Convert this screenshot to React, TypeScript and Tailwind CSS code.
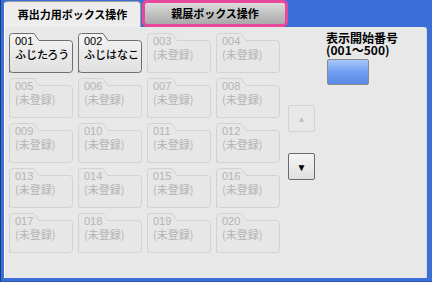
import React from "react";

const JP = "font-['Noto_Sans_CJK_JP','Noto_Sans',sans-serif]";
const NUM = "font-['Liberation_Sans_Narrow','Liberation_Sans',sans-serif]";

function FolderShape({ active }: { active: boolean }) {
  const d =
    "M0.5 39.5 L0.5 3.5 Q0.5 0.5 3.5 0.5 L25 0.5 L30 7.5 L60.5 7.5 Q63.5 7.5 63.5 10.5 L63.5 36.5 Q63.5 39.5 60.5 39.5 L3.5 39.5 Q0.5 39.5 0.5 36.5 Z";
  return (
    <svg className="absolute inset-0" width="64" height="40" viewBox="0 0 64 40">
      <defs>
        <linearGradient id="fa" x1="0" y1="0" x2="0" y2="1">
          <stop offset="0" stopColor="#f4f4f4" />
          <stop offset="1" stopColor="#e0e0e0" />
        </linearGradient>
      </defs>
      <path
        d={d}
        fill={active ? "url(#fa)" : "#e7e7e7"}
        stroke={active ? "#6e6e6e" : "#d2d2d2"}
        strokeWidth="1"
      />
    </svg>
  );
}

function Folder({ num, name }: { num: string; name?: string }) {
  const active = !!name;
  return (
    <div className="relative w-[64px] h-[40px]">
      <FolderShape active={active} />
      <div
        className={`relative flex flex-col pl-[6px] pt-[3px] ${
          active ? "text-black" : "text-[#b4b4b4]"
        }`}
      >
        <span className={`${NUM} h-[11px] text-[11px] leading-[11px]`}>{num}</span>
        <span className={`${JP} h-[14px] text-[11px] leading-[14px] ${active ? "font-medium" : ""}`}>
          {name ?? "(未登録)"}
        </span>
      </div>
    </div>
  );
}

export default function App() {
  const names: Record<number, string> = { 1: "ふじたろう", 2: "ふじはなこ" };
  const items = Array.from({ length: 20 }, (_, i) => i + 1);
  return (
    <div className="w-[432px] h-[282px] bg-[#3b6ed6] border-l border-l-[#1c3b7e] border-b border-b-[#2a55b0] flex flex-col pl-[3px] pr-[5px] pb-[3px] overflow-hidden">
      <div className="h-[27px] flex items-stretch shrink-0">
        <div
          className={`${JP} mt-[1px] w-[137px] bg-[#ededed] border border-b-0 border-[#9c9c9c] border-l-white rounded-t-[4px] flex items-center justify-center text-[11px] font-bold text-black pb-[1px]`}
        >
          再出力用ボックス操作
        </div>
        <div
          className={`${JP} ml-[1px] w-[146px] h-[27px] rounded-[5px] border-[3px] border-[#e8479c] bg-gradient-to-b from-[#dcdcdc] to-[#a9a9a9] flex items-center justify-center text-[11px] font-bold text-black`}
        >
          親展ボックス操作
        </div>
      </div>
      <div className="flex-1 bg-[#e8e8e8] border-l border-l-white border-r border-r-[#d8d8d8] rounded-tr-[3px] flex pl-[4px] pt-[6px]">
        <div className="grid grid-cols-[repeat(4,64px)] gap-x-[5px] gap-y-[5px] content-start">
          {items.map((n) => (
            <Folder key={n} num={String(n).padStart(3, "0")} name={names[n]} />
          ))}
        </div>
        <div className="ml-[8px] pt-[72px] flex flex-col gap-[21px]">
          <div className="w-[27px] h-[27px] rounded-[2px] border border-[#d2d2d2] bg-[#e8e8e8] flex items-center justify-center">
            <span className="text-[8px] leading-none text-[#bdbdbd]">▲</span>
          </div>
          <div className="w-[27px] h-[27px] rounded-[2px] border border-[#6a6a6a] bg-gradient-to-b from-[#f6f6f6] to-[#dedede] flex items-center justify-center">
            <span className="text-[10px] leading-none text-black">▼</span>
          </div>
        </div>
        <div className="ml-[11px] -mt-[1px] flex flex-col">
          <p className={`${JP} h-[24px] text-[12px] leading-[12px] font-bold text-black whitespace-pre-line`}>
            {"表示開始番号\n(001〜500)"}
          </p>
          <div className="mt-[3px] ml-[1px] w-[42px] h-[26px] rounded-[2px] border border-[#8a8a8a] bg-gradient-to-b from-[#a9c8fa] via-[#6f9df0] to-[#5a8ae6]" />
        </div>
      </div>
    </div>
  );
}
